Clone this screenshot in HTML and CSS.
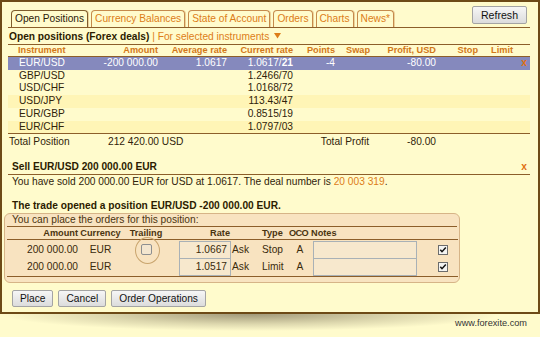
FILE: index.html
```html
<!DOCTYPE html>
<html>
<head>
<meta charset="utf-8">
<title>Open Positions</title>
<link rel="stylesheet" href="styles.css">
</head>
<body>
<div class="frame">
  <div class="topbar">
    <div class="tabs">
      <span class="tab active">Open Positions</span>
      <span class="tab">Currency Balances</span>
      <span class="tab">State of Account</span>
      <span class="tab">Orders</span>
      <span class="tab">Charts</span>
      <span class="tab">News*</span>
    </div>
    <button class="btn refresh">Refresh</button>
  </div>

  <div class="heading"><b>Open positions (Forex deals)</b> <span class="or">| For selected instruments <svg class="arrow" width="7" height="6" viewBox="0 0 7 6"><polygon points="0,0 7,0 3.5,5.5" fill="#dd7d18"/></svg></span></div>

  <table class="pos">
    <colgroup>
      <col class="c-ins"><col class="c-amt"><col class="c-avg"><col class="c-cur"><col class="c-pts"><col class="c-swp"><col class="c-pft"><col class="c-stp"><col class="c-lim"><col class="c-x">
    </colgroup>
    <thead>
      <tr>
        <th class="l">Instrument</th><th>Amount</th><th>Average rate</th><th>Current rate</th><th>Points</th><th>Swap</th><th>Profit, USD</th><th>Stop</th><th>Limit</th><th></th>
      </tr>
    </thead>
    <tbody>
      <tr class="sel"><td class="l">EUR/USD</td><td>-200 000.00</td><td>1.0617</td><td>1.0617/<b>21</b></td><td>-4</td><td></td><td>-80.00</td><td></td><td></td><td class="x">x</td></tr>
      <tr><td class="l">GBP/USD</td><td></td><td></td><td>1.2466/70</td><td></td><td></td><td></td><td></td><td></td><td></td></tr>
      <tr><td class="l">USD/CHF</td><td></td><td></td><td>1.0168/72</td><td></td><td></td><td></td><td></td><td></td><td></td></tr>
      <tr class="alt"><td class="l">USD/JPY</td><td></td><td></td><td>113.43/47</td><td></td><td></td><td></td><td></td><td></td><td></td></tr>
      <tr><td class="l">EUR/GBP</td><td></td><td></td><td>0.8515/19</td><td></td><td></td><td></td><td></td><td></td><td></td></tr>
      <tr class="alt"><td class="l">EUR/CHF</td><td></td><td></td><td>1.0797/03</td><td></td><td></td><td></td><td></td><td></td><td></td></tr>
    </tbody>
    <tfoot>
      <tr><td class="tl">Total Position</td><td colspan="3" class="tv">212 420.00 USD</td><td colspan="2" class="tp">Total Profit</td><td>-80.00</td><td colspan="3"></td></tr>
    </tfoot>
  </table>

  <div class="sell"><b>Sell EUR/USD 200 000.00 EUR</b><span class="close">x</span></div>
  <div class="msg">You have sold 200 000.00 EUR for USD at 1.0617. The deal number is <span class="or">20 003 319</span>.</div>
  <div class="opened">The trade opened a position EUR/USD -200 000.00 EUR.</div>

  <div class="panel">
    <div class="panel-title">You can place the orders for this position:</div>
    <table class="orders">
      <colgroup>
        <col class="o1"><col class="o2"><col class="o3"><col class="o4"><col class="o5"><col class="o6"><col class="o7"><col class="o8"><col class="o9">
      </colgroup>
      <thead>
        <tr><th class="r">Amount</th><th>Currency</th><th>Trailing</th><th class="r">Rate</th><th></th><th class="tl">Type</th><th class="oco">OCO</th><th class="nl">Notes</th><th></th></tr>
      </thead>
      <tbody>
        <tr class="first">
          <td class="r">200 000.00</td><td class="c">EUR</td>
          <td><div class="cbwrap ring"><svg width="11" height="11" viewBox="0 0 11 11"><rect x="0.5" y="0.5" width="10" height="10" rx="1.5" fill="#f3e6cf" stroke="#8d8f90"/></svg></div></td>
          <td><div class="inp rate">1.0667</div></td><td class="ask">Ask</td><td class="tl">Stop</td><td class="c">A</td>
          <td><div class="inp notes"></div></td>
          <td class="chk"><svg width="10" height="10" viewBox="0 0 10 10"><rect x="0.5" y="0.5" width="9" height="9" fill="#f4f4f2" stroke="#6c6c6c"/><path d="M2.3 4.8 L4 6.7 L7.8 2.6" fill="none" stroke="#111" stroke-width="1.5"/></svg></td>
        </tr>
        <tr class="last">
          <td class="r">200 000.00</td><td class="c">EUR</td>
          <td></td>
          <td><div class="inp rate">1.0517</div></td><td class="ask">Ask</td><td class="tl">Limit</td><td class="c">A</td>
          <td><div class="inp notes"></div></td>
          <td class="chk"><svg width="10" height="10" viewBox="0 0 10 10"><rect x="0.5" y="0.5" width="9" height="9" fill="#f4f4f2" stroke="#6c6c6c"/><path d="M2.3 4.8 L4 6.7 L7.8 2.6" fill="none" stroke="#111" stroke-width="1.5"/></svg></td>
        </tr>
      </tbody>
    </table>
  </div>

  <div class="actions">
    <button class="btn">Place</button>
    <button class="btn">Cancel</button>
    <button class="btn">Order Operations</button>
  </div>
</div>
<div class="footer">www.forexite.com</div>
</body>
</html>
```

FILE: styles.css
```css
* { box-sizing: border-box; }
html, body { margin: 0; padding: 0; }
body {
  width: 540px;
  height: 337px;
  overflow: hidden;
  background: #fffbcc;
  font-family: "Liberation Sans", Arial, sans-serif;
  font-size: 10.2px;
  color: #30230a;
}
.or { color: #dd7d18; }

.frame {
  height: 314px;
  border: 2px solid #6d4a16;
  padding: 4px 8px 0 6px;
}

/* top bar */
.topbar {
  display: flex;
  justify-content: space-between;
  height: 22px;
  border-bottom: 1px solid #8c5e2a;
}
.tabs {
  display: flex;
  align-items: flex-end;
  gap: 3px;
  margin-left: 3px;
}
.tab {
  height: 17px;
  line-height: 16px;
  padding: 0 3px;
  border: 1px solid #c58a4c;
  border-bottom: 0;
  border-radius: 4px 4px 0 0;
  color: #dd7d18;
  box-shadow: 1px 0 0 #ecd29a;
}
.tab.active {
  border-color: #7f5c2c;
  color: #2c2008;
}
.btn {
  font-family: "Liberation Sans", Arial, sans-serif;
  font-size: 10.2px;
  color: #111;
  height: 17px;
  padding: 0 7px;
  border: 1px solid #a4a4a4;
  border-radius: 2px;
  background: linear-gradient(#f6f6f6, #dcdcdc);
  line-height: 15px;
}
.refresh {
  align-self: flex-start;
  margin-right: 3px;
  height: 18px;
  width: 55px;
  padding: 0;
  font-size: 10.6px;
}

/* heading */
.heading {
  height: 17px;
  padding: 1px 0 0 1px;
  line-height: 15px;
  border-bottom: 1px solid #8c5e2a;
  color: #2c1c00;
}
.arrow { margin-left: 2px; vertical-align: 1px; }

/* positions table */
.pos {
  width: 100%;
  table-layout: fixed;
  border-collapse: separate;
  border-spacing: 0;
}
.c-ins { width: 92px; }
.c-amt { width: 60px; }
.c-avg { width: 69px; }
.c-cur { width: 66px; }
.c-pts { width: 42px; }
.c-swp { width: 35px; }
.c-pft { width: 66px; }
.c-stp { width: 42px; }
.c-lim { width: 35px; }
.c-x { width: 15px; }
.pos th {
  font-size: 9.2px;
  font-weight: bold;
  color: #d27818;
  line-height: 11px;
  height: 12px;
  padding: 0 2px 0 0;
  text-align: right;
  border-bottom: 1px solid #8c5e2a;
  white-space: nowrap;
}
.pos th.l { text-align: left; padding: 0 0 0 10px; }
.pos td {
  height: 12.7px;
  line-height: 12.7px;
  padding: 0 2px 0 0;
  text-align: right;
  white-space: nowrap;
  overflow: visible;
}
.pos td.l { text-align: left; padding: 0 0 0 11px; }
.pos tr.sel td { background: #8589bd; color: #fff; }
.pos tr.alt td { background: #fff5b6; }
.pos tr.sel td.x {
  text-align: center;
  padding: 0 0 0 3px;
  color: #e07010;
  font-weight: bold;
}
.pos tfoot td {
  height: 16px;
  line-height: 15px;
  border-top: 1px solid #8c5e2a;
  color: #30230a;
}
.pos tfoot td.tl { text-align: left; padding-left: 1px; }
.pos tfoot td.tv { text-align: left; padding-left: 8px; }
.pos tfoot td.tp { padding-right: 3px; }

/* sell message */
.sell {
  display: flex;
  justify-content: space-between;
  margin-top: 11px;
  height: 15px;
  line-height: 14px;
  padding: 0 3px 0 4px;
  border-bottom: 1px solid #8c5e2a;
  color: #2c1c00;
}
.close { color: #e07010; font-weight: bold; }
.msg { line-height: 13px; padding-left: 4px; }
.opened {
  margin-top: 11px;
  line-height: 13px;
  padding-left: 4px;
  font-weight: bold;
  color: #2c1c00;
}

/* order panel */
.panel {
  width: 456px;
  margin: 1px 0 0 -4px;
  border: 1px solid #d6b487;
  border-radius: 6px;
  background: #f8e3c0;
  padding: 0 2px 5px 2px;
}
.panel-title {
  line-height: 12px;
  padding-left: 5px;
  border-bottom: 1px solid #8c5e2a;
  color: #4a3410;
}
.orders {
  width: 100%;
  table-layout: fixed;
  border-collapse: separate;
  border-spacing: 0;
}
.o1 { width: 72px; }
.o2 { width: 43px; }
.o3 { width: 48px; }
.o4 { width: 61px; }
.o5 { width: 27px; }
.o6 { width: 31px; }
.o7 { width: 22px; }
.o8 { width: 119px; }
.o9 { width: 28px; }
.orders th {
  font-size: 9.2px;
  font-weight: bold;
  color: #4a3410;
  line-height: 12px;
  height: 13px;
  padding: 0;
  text-align: center;
  border-bottom: 1px solid #8c5e2a;
  white-space: nowrap;
}
.orders th.r { text-align: right; padding-right: 1px; }
.orders th.tl { text-align: left; padding-left: 4px; }
.orders th.nl { text-align: left; }
.orders th.oco { letter-spacing: -0.6px; padding-right: 3px; }
.orders td {
  height: 17px;
  line-height: 17px;
  padding: 0;
  vertical-align: top;
  white-space: nowrap;
  color: #3a2a0c;
}
.orders tr.first td { padding-top: 1px; height: 18px; }
.orders tr.last td {
  padding-bottom: 1px;
  height: 19px;
  border-bottom: 1px solid #8c5e2a;
}
.orders td.r { text-align: right; padding-right: 1px; }
.orders td.c { text-align: center; }
.orders td.ask { padding-left: 1px; }
.orders td.tl { padding-left: 4px; }
.orders td.chk { padding-left: 8px; }
.orders td.chk svg { display: block; margin-top: 4px; }

.inp {
  height: 18px;
  margin-bottom: -1px;
  border: 1px solid #a9b1b6;
  background: #f7e8cd;
  line-height: 16px;
}
.inp.rate {
  width: 52px;
  margin-left: 9px;
  text-align: right;
  padding-right: 3px;
}
.inp.notes {
  width: 104px;
  margin-left: 2px;
}

.cbwrap {
  position: relative;
  height: 17px;
  display: flex;
  align-items: center;
  justify-content: center;
}
.cbwrap svg { display: block; }
.ring::after {
  content: "";
  position: absolute;
  left: 50%;
  top: 50%;
  width: 23px;
  height: 25px;
  margin: -12.5px 0 0 -11.5px;
  border: 1px solid #c9a56e;
  border-radius: 50%;
}

/* action buttons */
.actions {
  display: flex;
  gap: 5px;
  margin-top: 7px;
  padding-left: 4px;
}

/* footer with shadow */
.footer {
  height: 23px;
  padding: 4px 13px 0 0;
  text-align: right;
  line-height: 10px;
  font-size: 9.2px;
  color: #333;
  background: radial-gradient(ellipse 250px 17px at 250px 0, rgba(120, 110, 85, 0.7), rgba(120, 110, 85, 0.25) 60%, rgba(120, 110, 85, 0) 100%);
}
```
